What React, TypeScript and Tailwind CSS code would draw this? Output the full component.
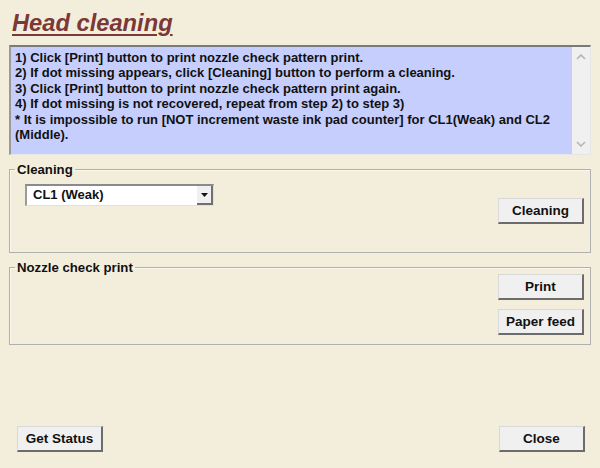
import React from "react";

const font = { fontFamily: '"Liberation Sans", Arial, sans-serif' };

function WinButton({ label }: { label: string }) {
  return (
    <button
      className="w-[86px] h-[26px] bg-[#f0f0f0] border-t border-l border-[#d8d8d8] border-r-2 border-b-2 border-r-[#6c6c6c] border-b-[#6c6c6c] text-[13.5px] font-bold text-[#111] leading-none flex items-center justify-center"
    >
      {label}
    </button>
  );
}

export default function App() {
  return (
    <div
      className="w-[600px] h-[468px] bg-[#f3eedb] flex flex-col px-[9px] text-[#111]"
      style={font}
    >
      <div className="pt-[9px] pl-[3px] h-[45px]">
        <span className="text-[23.7px] leading-[28px] font-bold italic underline text-[#7b3838] decoration-[2px] underline-offset-[3px]">
          Head cleaning
        </span>
      </div>

      <div className="h-[110px] flex border-t-2 border-l-2 border-t-[#7a7a7a] border-l-[#9a9a9a] border-r border-b border-r-[#e6e6e6] border-b-[#e6e6e6]">
        <div className="flex-1 bg-[#c6cefd] pl-[4px] pt-[3px] text-[13px] font-bold leading-[15.4px]">
          <div>1) Click [Print] button to print nozzle check pattern print.</div>
          <div>2) If dot missing appears, click [Cleaning] button to perform a cleaning.</div>
          <div>3) Click [Print] button to print nozzle check pattern print again.</div>
          <div>4) If dot missing is not recovered, repeat from step 2) to step 3)</div>
          <div>
            * It is impossible to run [NOT increment waste ink pad counter] for CL1(Weak) and CL2
            (Middle).
          </div>
        </div>
        <div className="w-[18px] bg-[#f0f0f0] flex flex-col justify-between items-center py-[7px]">
          <svg width="10" height="6" viewBox="0 0 10 6">
            <path d="M1 5 L5 1 L9 5" stroke="#b4b4b4" strokeWidth="1.6" fill="none" />
          </svg>
          <svg width="10" height="6" viewBox="0 0 10 6">
            <path d="M1 1 L5 5 L9 1" stroke="#b4b4b4" strokeWidth="1.6" fill="none" />
          </svg>
        </div>
      </div>

      <fieldset className="mt-[7px] h-[91px] border border-[#b0b0b0] shadow-[inset_1px_1px_0_#fbf8ef]">
        <legend className="ml-[5px] px-[2px] text-[13.2px] font-bold leading-[15px]">Cleaning</legend>
        <div className="flex justify-between items-start pl-[15px] pr-[6px] pt-[7px]">
          <div className="w-[189px] h-[22px] flex bg-white border-t-2 border-l-2 border-t-[#8a8a8a] border-l-[#9a9a9a] border-r border-b border-r-[#e0e0e0] border-b-[#e0e0e0]">
            <div className="flex-1 pl-[6px] text-[13px] font-bold leading-[18px]">CL1 (Weak)</div>
            <div className="w-[16px] bg-[#f0f0f0] border-r-2 border-b-2 border-r-[#707070] border-b-[#707070] flex items-center justify-center">
              <svg width="7" height="4" viewBox="0 0 7 4">
                <path d="M0 0 L7 0 L3.5 4 Z" fill="#111" />
              </svg>
            </div>
          </div>
          <div className="mt-[14px]">
            <WinButton label="Cleaning" />
          </div>
        </div>
      </fieldset>

      <fieldset className="mt-[7px] h-[85px] border border-[#b0b0b0] shadow-[inset_1px_1px_0_#fbf8ef]">
        <legend className="ml-[5px] px-[2px] text-[13.2px] font-bold leading-[15px]">Nozzle check print</legend>
        <div className="flex flex-col items-end gap-[9px] pr-[6px] -mt-[1px]">
          <WinButton label="Print" />
          <WinButton label="Paper feed" />
        </div>
      </fieldset>

      <div className="mt-[81px] flex justify-between pl-[8px] pr-[6px]">
        <WinButton label="Get Status" />
        <WinButton label="Close" />
      </div>
    </div>
  );
}
